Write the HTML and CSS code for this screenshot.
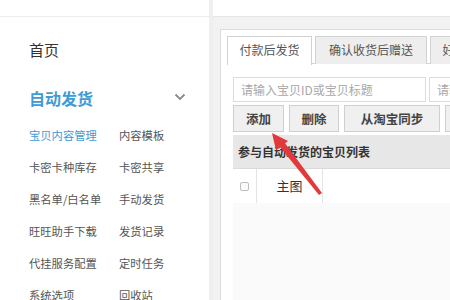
FILE: index.html
```html
<!DOCTYPE html>
<html lang="zh-CN">
<head>
    <meta charset="UTF-8">
    <meta name="viewport" content="width=device-width, initial-scale=1.0">
    <title>自动发货</title>
    <link rel="stylesheet" href="styles.css">
</head>
<body>
    <div class="app">
        <aside class="sidebar">
            <div class="side-top"></div>
            <div class="nav-home">首页</div>
            <div class="nav-group">
                <span>自动发货</span>
                <svg class="chevron" width="12" height="8" viewBox="0 0 12 8">
                    <path d="M1.5 1.5 L6 6 L10.5 1.5" fill="none" stroke="#8a8a8a" stroke-width="1.8"/>
                </svg>
            </div>
            <ul class="nav-items">
                <li class="active">宝贝内容管理</li>
                <li>内容模板</li>
                <li>卡密卡种库存</li>
                <li>卡密共享</li>
                <li>黑名单/白名单</li>
                <li>手动发货</li>
                <li>旺旺助手下载</li>
                <li>发货记录</li>
                <li>代挂服务配置</li>
                <li>定时任务</li>
                <li>系统选项</li>
                <li>回收站</li>
            </ul>
        </aside>

        <main class="main">
            <div class="main-top"></div>
            <div class="panel">
                <div class="tabs">
                    <div class="tab active">付款后发货</div>
                    <div class="tab tab-wide">确认收货后赠送</div>
                    <div class="tab">好评后赠送</div>
                </div>
                <div class="panel-body">
                    <div class="search-row">
                        <input type="text" class="search-input" placeholder="请输入宝贝ID或宝贝标题">
                        <input type="text" class="search-input" placeholder="请输入宝贝ID或宝贝标题">
                    </div>
                    <div class="btn-row">
                        <button class="btn btn-add">添加</button>
                        <button class="btn btn-del">删除</button>
                        <button class="btn btn-sync">从淘宝同步</button>
                        <button class="btn">导入</button>
                    </div>
                    <div class="list">
                        <div class="list-title">参与自动发货的宝贝列表</div>
                        <div class="list-head">
                            <div class="col-check"><span class="checkbox"></span></div>
                            <div class="col-pic">主图</div>
                            <div class="col-rest"></div>
                        </div>
                        <div class="list-empty"></div>
                    </div>
                </div>
            </div>
        </main>
    </div>

    <!-- annotation arrow drawn over the screenshot -->
    <svg class="arrow" width="450" height="300" viewBox="0 0 450 300">
        <polygon points="319,195 322,193 284.5,142.5 279.5,146.5" fill="#e23a3c"/>
        <polygon points="272,133 288,141 276,150.5" fill="#e23a3c"/>
    </svg>
</body>
</html>
```

FILE: styles.css
```css
* {
    box-sizing: border-box;
}

body {
    margin: 0;
    width: 450px;
    height: 300px;
    overflow: hidden;
    font-family: "Noto Sans CJK SC", "Noto Sans", sans-serif;
    color: #333;
    background: #fff;
    position: relative;
}

.app {
    display: flex;
    height: 300px;
}

/* sidebar */

.sidebar {
    width: 213px;
    flex-shrink: 0;
    background: #fff;
    border-right: 4px solid #efefef;
    padding-left: 29px;
}

.side-top {
    height: 17px;
    margin-left: -29px;
    border-bottom: 1px solid #ececec;
}

.nav-home {
    margin-top: 18px;
    height: 30px;
    line-height: 30px;
    font-size: 15px;
    color: #333;
}

.nav-group {
    margin-top: 18px;
    height: 30px;
    line-height: 30px;
    font-size: 16px;
    font-weight: bold;
    color: #3f9bd6;
    display: flex;
    align-items: center;
    justify-content: space-between;
    padding-right: 23px;
}

.chevron {
    margin-top: -2px;
}

.nav-items {
    list-style: none;
    margin: 6px 0 0;
    padding: 0;
    display: grid;
    grid-template-columns: 90px 90px;
    grid-auto-rows: 32px;
}

.nav-items li {
    font-size: 11.3px;
    line-height: 32px;
    color: #555;
    white-space: nowrap;
}

.nav-items li.active {
    color: #3f9bd6;
}

/* main area */

.main {
    flex: 1;
    background: #f2f2f2;
    overflow: hidden;
}

.main-top {
    height: 17px;
    background: #fff;
    border-bottom: 1px solid #e6e6e6;
}

.panel {
    margin: 12px 0 0 7px;
    width: 300px;
    height: 280px;
    background: #fff;
    border: 1px solid #dcdcdc;
    padding: 6px 0 0 6px;
}

.tabs {
    display: flex;
    gap: 3px;
    height: 28px;
    border-bottom: 1px solid #d6d6d6;
}

.tab {
    flex-shrink: 0;
    width: 85px;
    height: 28px;
    line-height: 26px;
    font-size: 12px;
    text-align: center;
    color: #555;
    background: #eee;
    border: 1px solid #d2d2d2;
    border-bottom: none;
    white-space: nowrap;
}

.tab-wide {
    width: 112px;
}

.tab.active {
    background: #fff;
    height: 29px;
}

.panel-body {
    padding: 13px 0 0 6px;
}

.search-row {
    display: flex;
    gap: 3px;
}

.search-input {
    flex-shrink: 0;
    width: 193px;
    height: 25px;
    margin: 0;
    padding: 0 7px;
    border: 1px solid #dcdcdc;
    font-family: inherit;
    font-size: 12px;
    color: #333;
}

.search-input::placeholder {
    color: #a8a8a8;
}

.btn-row {
    display: flex;
    gap: 5px;
    margin-top: 3px;
}

.btn {
    flex-shrink: 0;
    height: 27px;
    width: 51px;
    padding: 0;
    font-family: inherit;
    font-size: 12.5px;
    font-weight: bold;
    color: #444;
    background: #f0f0f0;
    border: 1px solid #cfcfcf;
}

.btn-del {
    width: 50px;
}

.btn-sync {
    width: 96px;
}

.list {
    margin-top: 3px;
    width: 230px;
}

.list-title {
    height: 34px;
    line-height: 34px;
    padding-left: 5px;
    font-size: 12px;
    font-weight: bold;
    color: #333;
    background: #e7e7e7;
    border-bottom: 1px solid #dadada;
    white-space: nowrap;
}

.list-head {
    display: flex;
    height: 34px;
    background: #fff;
}

.col-check {
    width: 24px;
    display: flex;
    align-items: center;
    justify-content: center;
    border-right: 1px solid #e4e4e4;
}

.checkbox {
    width: 9px;
    height: 9px;
    border: 1px solid #bdbdbd;
    border-radius: 2px;
    background: #fafafa;
}

.col-pic {
    width: 66px;
    line-height: 34px;
    text-align: center;
    font-size: 13px;
    color: #333;
    border-right: 1px solid #e4e4e4;
}

.list-empty {
    height: 100px;
    background: #fafafa;
}

.arrow {
    position: absolute;
    left: 0;
    top: 0;
    pointer-events: none;
}
```
